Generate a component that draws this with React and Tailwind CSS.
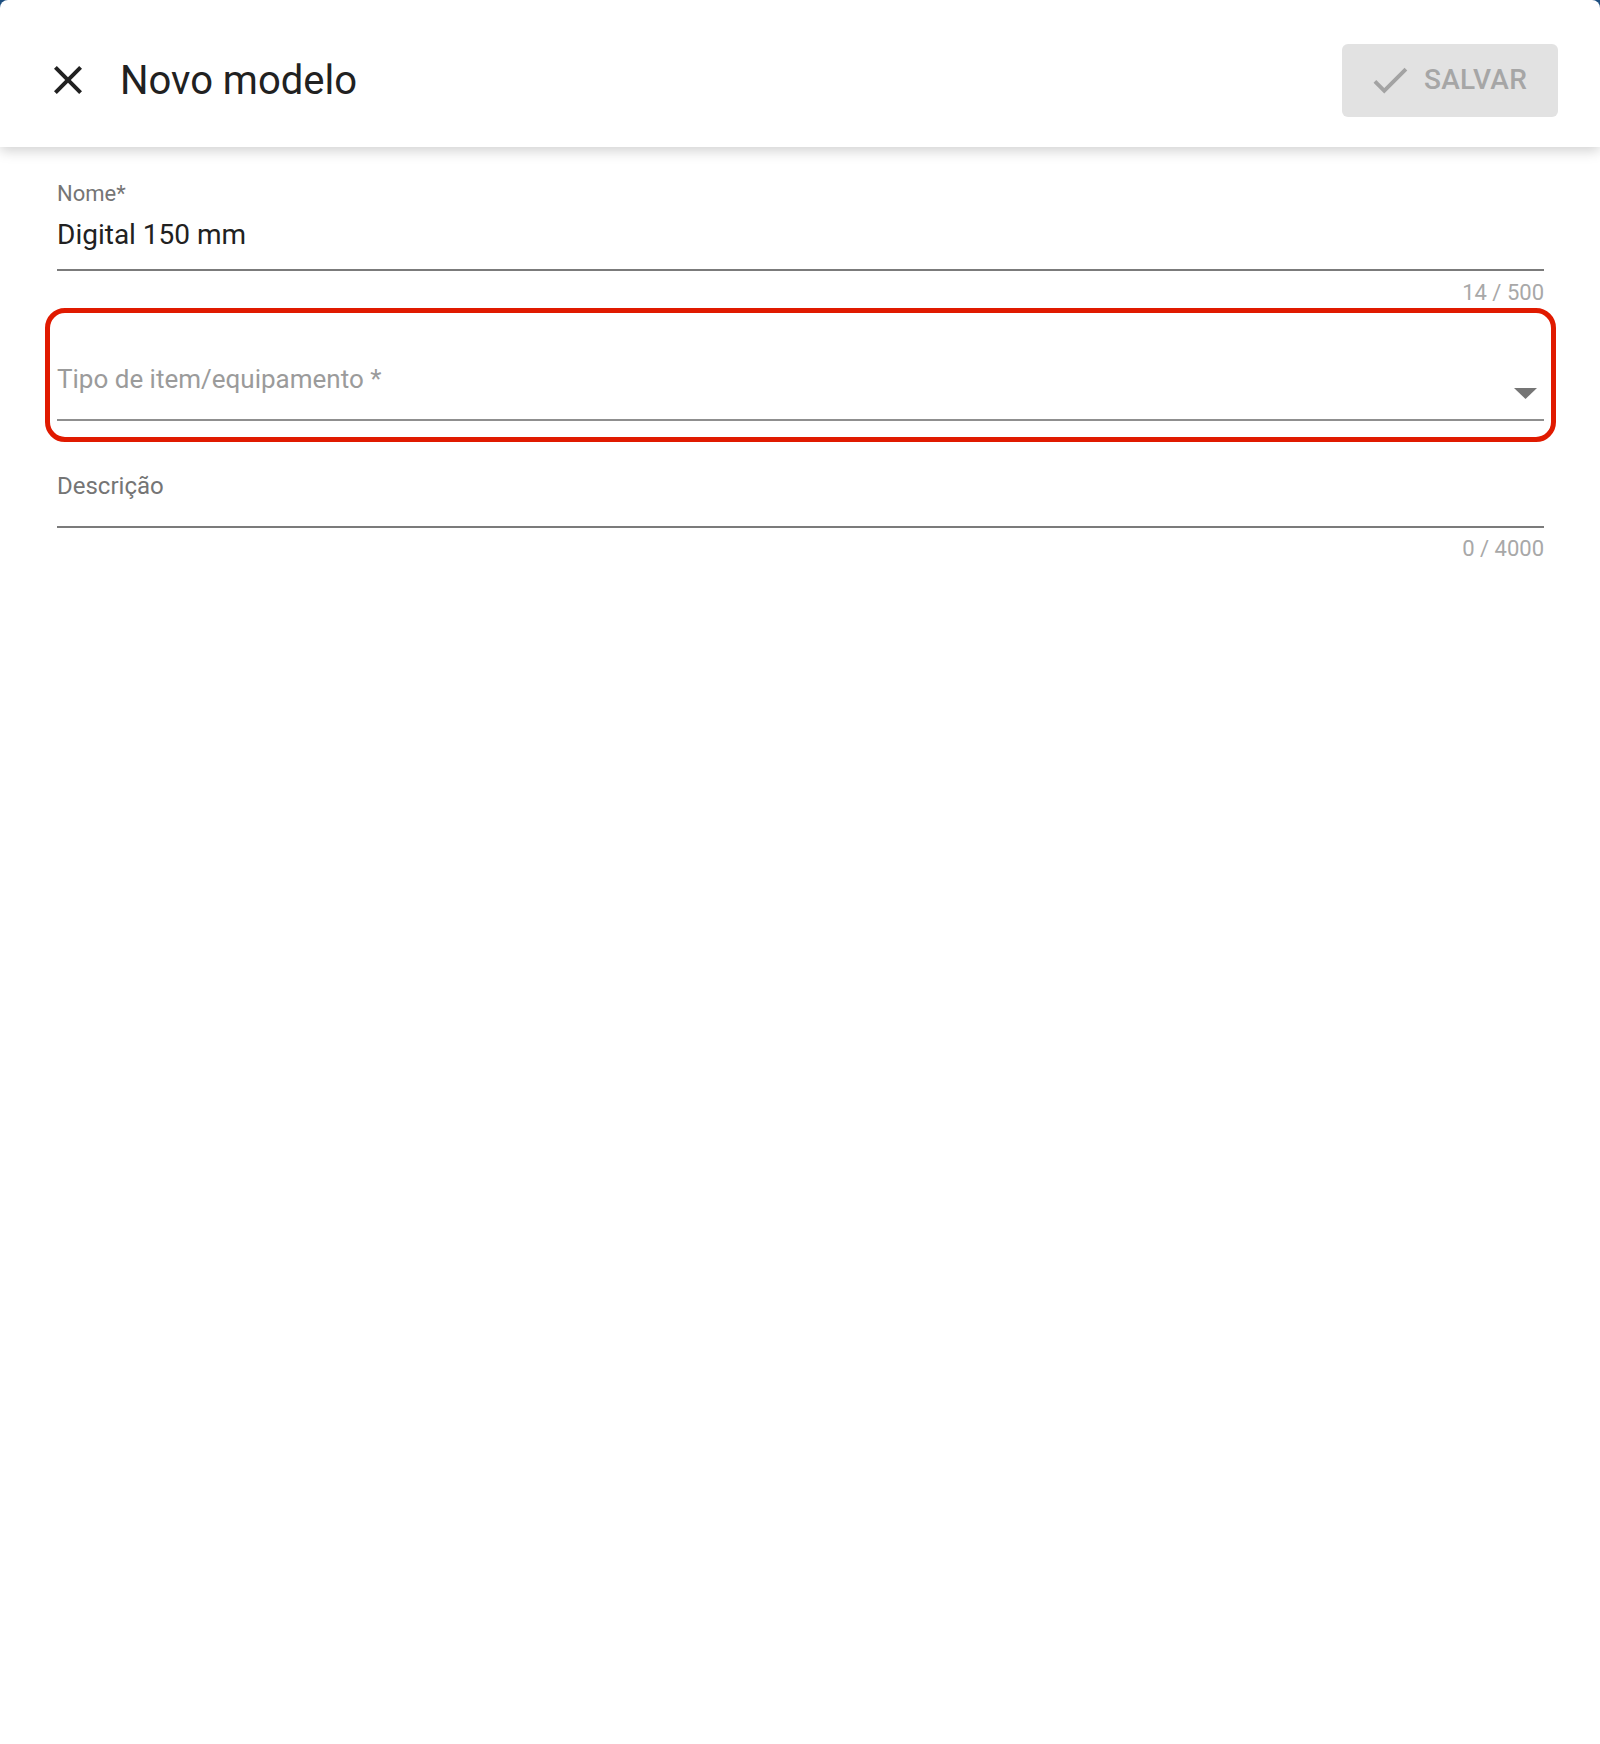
import { useState } from "react";

const font = { fontFamily: "Roboto, 'Noto Sans', Arial, sans-serif" };

const CloseIcon = () => (
  <svg width="48" height="48" viewBox="0 0 24 24" fill="#212121">
    <path d="M19 6.41 17.59 5 12 10.59 6.41 5 5 6.41 10.59 12 5 17.59 6.41 19 12 13.41 17.59 19 19 17.59 13.41 12z" />
  </svg>
);

const CheckIcon = () => (
  <svg width="46" height="46" viewBox="0 0 24 24" fill="#a3a3a3">
    <path d="M9 16.17 4.83 12l-1.42 1.41L9 19 21 7l-1.41-1.41z" />
  </svg>
);

const App = () => {
  const [nome, setNome] = useState("Digital 150 mm");

  return (
    <div className="h-[1744px] w-full bg-[#1d4f80]" style={font}>
      <div className="flex h-full flex-col rounded-t-[8px] bg-white">
        {/* barra superior */}
        <header className="relative z-10 flex h-[147px] items-center justify-between pt-[13px] pl-[44px] pr-[42px] shadow-[0_4px_12px_rgba(0,0,0,0.18)]">
          <div className="flex items-center">
            <button className="flex">
              <CloseIcon />
            </button>
            <h1 className="ml-[28px] mt-[2px] text-[40px] leading-[48px] text-[#212121]">
              Novo modelo
            </h1>
          </div>
          <button
            disabled
            className="flex h-[73px] w-[216px] items-center rounded-[6px] bg-[#e2e2e2] pl-[25px]"
          >
            <CheckIcon />
            <span className="ml-[11px] text-[28px] font-medium leading-[32px] tracking-[0.3px] text-[#a6a6a6]">
              SALVAR
            </span>
          </button>
        </header>

        <main className="px-[56px] pl-[57px]">
          {/* Nome */}
          <div className="mt-[34px]">
            <label className="block text-[22px] leading-[26px] text-[#757575]">Nome*</label>
            <input
              value={nome}
              onChange={(e) => setNome(e.target.value)}
              className="mt-[12px] block h-[32px] w-full border-0 text-[28px] leading-[32px] text-[#212121] outline-none"
            />
            <div className="mt-[18px] h-[2px] bg-[#7b7b7b]" />
            <div className="mt-[10px] text-right text-[22px] leading-[24px] text-[#a8a8a8]">
              {nome.length} / 500
            </div>
          </div>

          {/* Tipo de item */}
          <div className="-mx-[12px] mt-[3px] rounded-[20px] border-[5px] border-[#e01a00] px-[7px] pt-[51px] pb-[16px]">
            <div className="flex items-end justify-between">
              <span className="pb-[25px] text-[26px] leading-[30px] text-[#9b9b9b]">
                Tipo de item/equipamento *
              </span>
              <svg width="23" height="11" viewBox="0 0 23 11" className="mr-[7px] mb-[20px]">
                <polygon points="0,0 23,0 11.5,11" fill="#757575" />
              </svg>
            </div>
            <div className="h-[2px] bg-[#8f8f8f]" />
          </div>

          {/* Descrição */}
          <div className="mt-[31px]">
            <div className="pb-[26px] text-[24px] leading-[27px] text-[#757575]">Descrição</div>
            <div className="h-[2px] bg-[#7b7b7b]" />
            <div className="mt-[9px] text-right text-[22px] leading-[24px] text-[#a8a8a8]">
              0 / 4000
            </div>
          </div>
        </main>
      </div>
    </div>
  );
};

export default App;
